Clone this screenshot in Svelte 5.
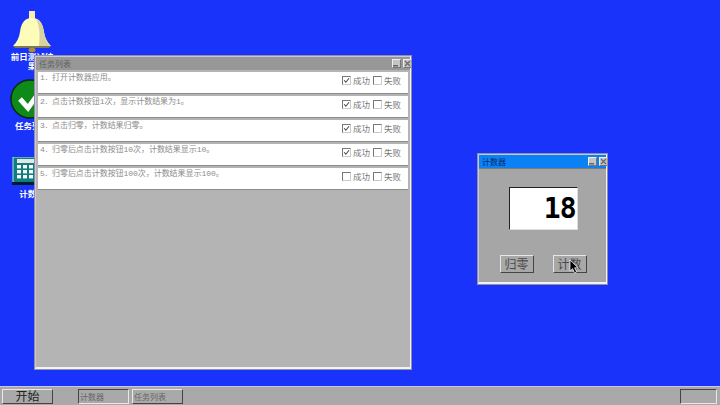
<script lang="ts">
	type Task = { no: string; text: string; ok: boolean; fail: boolean };

	const tasks: Task[] = [
		{ no: '1. ', text: '打开计数器应用。', ok: true, fail: false },
		{ no: '2. ', text: '点击计数按钮1次，显示计数结果为1。', ok: true, fail: false },
		{ no: '3. ', text: '点击归零，计数结果归零。', ok: true, fail: false },
		{ no: '4. ', text: '归零后点击计数按钮10次，计数结果显示10。', ok: true, fail: false },
		{ no: '5. ', text: '归零后点击计数按钮100次，计数结果显示100。', ok: false, fail: false }
	];

	let count = $state(18);
</script>

{#snippet controls()}
	<div class="ctrls">
		<button class="ctrl" type="button" aria-label="最小化">
			<svg width="7" height="7" viewBox="0 0 7 7"><rect x="0" y="5" width="5" height="1.5" fill="#666" /></svg>
		</button>
		<button class="ctrl" type="button" aria-label="关闭">
			<svg width="7" height="7" viewBox="0 0 7 7"><path d="M1 1 6 6M6 1 1 6" stroke="#666" stroke-width="1.1" /></svg>
		</button>
	</div>
{/snippet}

{#snippet check(on: boolean, label: string)}
	<span class="check">
		<span class="box">
			{#if on}
				<svg width="9" height="9" viewBox="0 0 9 9"><path d="M1.5 4.2 3.6 6.8 7.8 1.6" fill="none" stroke="#444" stroke-width="1.3" /></svg>
			{/if}
		</span>
		{label}
	</span>
{/snippet}

<div class="screen">
	<div class="desktop">
		<div class="icon bell">
			<svg width="38" height="44" viewBox="0 0 38 44">
				<rect x="16" y="1" width="6" height="9" fill="#f5eeb0" />
				<path d="M19 8C11 8 8 14 7 22C6 28 4 32 0 36H38C34 32 32 28 31 22C30 14 27 8 19 8Z" fill="#fdfcb8" />
				<path d="M23 9C29 11 30 17 31 23C32 28 34 32 37 36H26C27 26 27 16 23 9Z" fill="#d8d2a0" />
				<path d="M0 36H38L36 38H2Z" fill="#7d7858" />
				<ellipse cx="19" cy="40" rx="3.5" ry="2.2" fill="#b08a3c" />
			</svg>
			<span>前日测试结<br />果</span>
		</div>
		<div class="icon tick">
			<svg width="40" height="40" viewBox="0 0 40 40">
				<circle cx="20" cy="20" r="19" fill="#0d8a18" stroke="#05260a" stroke-width="1.4" />
				<path d="M10 20 18 29 31 11" fill="none" stroke="#fff" stroke-width="5" />
			</svg>
			<span>任务列表</span>
		</div>
		<div class="icon calc">
			<svg width="40" height="28" viewBox="0 0 40 28">
				<rect x="1" y="0" width="38" height="26" fill="#0d7f80" stroke="#dfe" stroke-width="0.8" />
				<rect x="5" y="2" width="30" height="4" fill="#e6e6e6" />
				<g fill="#fff">
					{#each [8, 13, 18] as y}
						{#each [5, 11, 17, 23, 29] as x}
							<rect {x} {y} width="4" height="3.4" />
						{/each}
					{/each}
				</g>
				<rect x="0" y="25" width="40" height="3" fill="#021a30" />
			</svg>
			<span>计数器</span>
		</div>
	</div>

	<section class="win tasks-win">
		<header class="title title--idle">
			<span>任务列表</span>
			{@render controls()}
		</header>
		<div class="rows">
			{#each tasks as t}
				<div class="row">
					<span class="task"><span class="no">{t.no}</span>{t.text}</span>
					<div class="checks">
						{@render check(t.ok, '成功')}
						{@render check(t.fail, '失败')}
					</div>
				</div>
			{/each}
		</div>
	</section>

	<section class="win calc-win">
		<header class="title title--active">
			<span>计数器</span>
			{@render controls()}
		</header>
		<div class="calc-body">
			<output class="display">{count}</output>
			<div class="btns">
				<button class="btn" type="button" onclick={() => (count = 0)}>归零</button>
				<button class="btn" type="button" onclick={() => count++}>计数</button>
			</div>
		</div>
	</section>

	<svg class="cursor" width="11" height="15" viewBox="0 0 11 15">
		<path d="M1 1V12L3.6 9.6 5.6 14 7.6 13 5.6 8.8H9Z" fill="#000" stroke="#fff" stroke-width="0.7" />
	</svg>

	<footer class="taskbar">
		<button class="start" type="button">开始</button>
		<div class="apps">
			<button class="app app--on" type="button">计数器</button>
			<button class="app" type="button">任务列表</button>
		</div>
		<div class="tray"></div>
	</footer>
</div>

<style>
	:global(body) {
		margin: 0;
	}

	.screen {
		position: relative;
		width: 720px;
		height: 405px;
		overflow: hidden;
		display: flex;
		flex-direction: column;
		justify-content: flex-end;
		background: #1a33fb;
		font-family: 'Noto Sans CJK SC', 'Liberation Sans', sans-serif;
	}

	.desktop {
		position: absolute;
		left: 0;
		top: 0;
	}

	.icon {
		position: absolute;
		left: 0;
		width: 64px;
		display: flex;
		flex-direction: column;
		align-items: center;
		color: #fff;
		font-size: 8.5px;
		font-weight: 700;
		line-height: 9px;
		text-align: center;
	}

	.bell {
		top: 10px;
	}

	.tick {
		top: 79px;
		gap: 2px;
	}

	.tick svg {
		margin-right: 4px;
	}

	.calc {
		top: 157px;
		gap: 4px;
	}

	.bell span {
		margin-top: -2px;
	}

	.win {
		position: absolute;
		box-sizing: border-box;
		display: flex;
		flex-direction: column;
		background: #b4b4b4;
		border-style: solid;
		border-width: 2px 2px 3px 2px;
		border-color: #c8c8d8 #f2f2f2 #f2f2f2 #c8c8d8;
		outline: 1px solid #8f8fa8;
		outline-offset: -1px;
	}

	.tasks-win {
		left: 34px;
		top: 55px;
		width: 378px;
		height: 315px;
	}

	.calc-win {
		left: 477px;
		top: 153px;
		width: 131px;
		height: 132px;
		background: #a6a6a6;
	}

	.title {
		display: flex;
		align-items: center;
		justify-content: space-between;
		height: 13px;
		flex: none;
		padding: 0 0 0 3px;
		font-size: 8px;
	}

	.title--idle {
		background: #979797;
		color: #606060;
	}

	.title--active {
		background: #0a82f5;
		color: #0a2a66;
		border-bottom: 1px solid #7c7c7c;
	}

	.ctrls {
		display: flex;
		gap: 2px;
		margin-right: -2px;
	}

	.ctrl {
		display: flex;
		align-items: center;
		justify-content: center;
		box-sizing: border-box;
		width: 9px;
		height: 9px;
		padding: 0;
		background: #c4c4c4;
		border: 1px solid;
		border-color: #eee #777 #777 #eee;
	}

	.rows {
		display: flex;
		flex-direction: column;
		gap: 2px;
		padding: 2px 2px 0;
	}

	.row {
		box-sizing: border-box;
		height: 22px;
		display: flex;
		align-items: flex-start;
		justify-content: space-between;
		padding: 1px 7px 0 2px;
		background: #fff;
		border-bottom: 1px solid #8c8c8c;
	}

	.task {
		font-family: 'Liberation Mono', 'Noto Sans CJK SC', monospace;
		font-size: 8px;
		line-height: 10px;
		letter-spacing: -0.05px;
		color: #8c8c8c;
		white-space: pre;
	}

	.no {
		letter-spacing: -0.8px;
	}

	.checks {
		display: flex;
		gap: 3px;
		padding-top: 2px;
	}

	.check {
		display: flex;
		align-items: center;
		gap: 2px;
		font-size: 8.5px;
		line-height: 10px;
		color: #777;
	}

	.box {
		box-sizing: border-box;
		width: 9px;
		height: 9px;
		display: flex;
		align-items: center;
		justify-content: center;
		background: #fff;
		border: 1px solid;
		border-color: #777 #ccc #ccc #777;
	}

	.calc-body {
		flex: 1;
		display: flex;
		flex-direction: column;
		align-items: center;
		padding-top: 18px;
	}

	.display {
		box-sizing: border-box;
		width: 69px;
		height: 43px;
		margin-left: 1px;
		padding: 0 1px 0 0;
		display: flex;
		align-items: center;
		justify-content: flex-end;
		background: #fff;
		border: 1px solid;
		border-color: #222 #ddd #ddd #222;
		color: #000;
		font-family: 'DejaVu Sans Mono', monospace;
		font-size: 28px;
		font-weight: 700;
		letter-spacing: -1px;
	}

	.btns {
		display: flex;
		gap: 19px;
		margin-top: 25px;
		margin-left: 1px;
	}

	.btn {
		box-sizing: border-box;
		width: 34px;
		height: 18px;
		padding: 0;
		background: #a8a8a8;
		border: 1px solid;
		border-color: #e6e6e6 #444 #444 #e6e6e6;
		color: #4a4a4a;
		font-family: inherit;
		font-size: 12px;
		line-height: 14px;
	}

	.cursor {
		position: absolute;
		left: 569px;
		top: 259px;
	}

	.taskbar {
		box-sizing: border-box;
		height: 19px;
		display: flex;
		align-items: center;
		padding: 1px 3px 0 2px;
		background: #a9a9a9;
		border-top: 1px solid #c9c9dd;
	}

	.start,
	.app,
	.tray {
		box-sizing: border-box;
		height: 15px;
		padding: 0;
		background: #a9a9a9;
		border: 1px solid;
		color: #333;
		font-family: inherit;
	}

	.start {
		width: 51px;
		border-color: #e8e8e8 #444 #444 #e8e8e8;
		font-size: 12px;
		line-height: 11px;
		padding-bottom: 2px;
		color: #222;
	}

	.apps {
		display: flex;
		gap: 3px;
		margin-left: 25px;
	}

	.app {
		width: 51px;
		border-color: #e8e8e8 #444 #444 #e8e8e8;
		font-size: 8px;
		line-height: 12px;
		color: #666;
		text-align: left;
		padding-left: 1px;
	}

	.app--on {
		border-color: #444 #e8e8e8 #e8e8e8 #444;
	}

	.tray {
		width: 37px;
		margin-left: auto;
		border-color: #444 #e8e8e8 #e8e8e8 #444;
	}
</style>
